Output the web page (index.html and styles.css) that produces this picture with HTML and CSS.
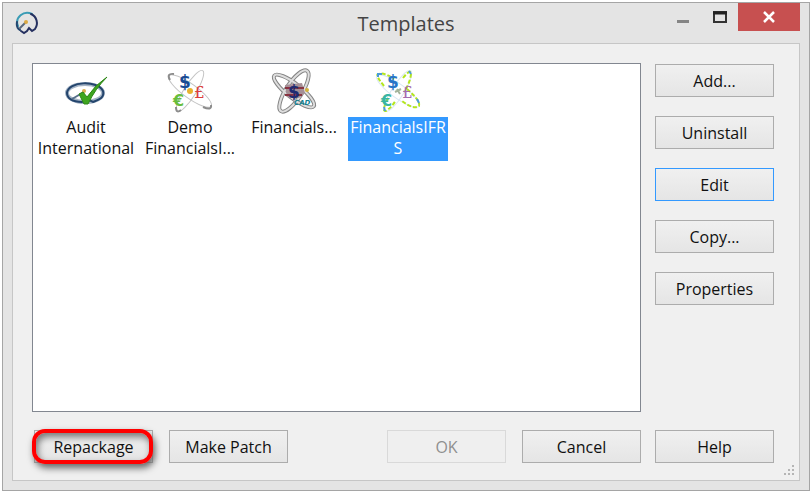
FILE: index.html
```html
<!DOCTYPE html>
<html lang="en">
<head>
  <meta charset="utf-8">
  <title>Templates</title>
  <link rel="stylesheet" href="styles.css">
</head>
<body>
  <div class="window">
    <header class="titlebar">
      <svg class="app-icon" viewBox="0 0 24 24" fill="none" stroke-linecap="round">
        <path d="M3 15A10 9.500 0 0 1 17 3" stroke="#3a9cb5" stroke-width="2"/>
        <path d="M16 3A10 10 0 0 1 20 18L17 20L14 17L12 20L9 22L6 20" stroke="#25305f" stroke-width="2"/>
        <path d="M2 11Q1 17 5 19" stroke="#25466f" stroke-width="2"/>
        <path d="M5 17L10 12" stroke="#59687c" stroke-width="2"/>
        <circle cx="11" cy="11" r="2" fill="#dba943"/>
      </svg>
      <h1>Templates</h1>
      <div class="window-controls">
        <button type="button" class="minimize" aria-label="Minimize">
          <svg width="12" height="14"><path d="M0 11.500H12" stroke="#858585" stroke-width="3"/></svg>
        </button>
        <button type="button" class="maximize" aria-label="Maximize">
          <svg width="14" height="12"><path d="M1 1H13V11H1Z" fill="none" stroke="#333" stroke-width="2"/><path d="M0 2H14" stroke="#222" stroke-width="3"/></svg>
        </button>
        <button type="button" class="close" aria-label="Close">
          <svg width="12" height="12"><path d="M1 1L11 11M11 1L1 11" stroke="#fff" stroke-width="2.500"/></svg>
        </button>
      </div>
    </header>

    <main class="client">
      <ul class="template-list">
        <li class="template">
          <svg viewBox="0 0 44 44" fill="none">
            <ellipse cx="21" cy="24" rx="18" ry="9" stroke="#a5b4c6" stroke-width="4"/>
            <path d="M3 24C4 12 34 11 39 22C41 29 34 31 29 33L23 30L18 33C8 33 3 29 3 24" stroke="#24456d" stroke-width="2"/>
            <path d="M8 30L20 23" stroke="#56708b" stroke-width="2"/>
            <circle cx="20" cy="22" r="2" fill="#d9ae4d"/>
            <path d="M15 25L19 23L23 28Q31 16 43 8Q31 20 24 35H20Z" fill="#3fa51f" stroke="#2f8719"/>
          </svg>
          <span>Audit International</span>
        </li>
        <li class="template">
          <svg viewBox="0 0 44 44" fill="none">
            <g stroke="#c4c4c4">
              <ellipse cx="22" cy="22" rx="26" ry="7" transform="rotate(36 22 22)"/>
              <ellipse cx="22" cy="22" rx="24" ry="6" transform="rotate(-58 22 22)"/>
            </g>
            <path d="M2 11Q-2 4 6 5M35 38Q44 42 43 36M8 38Q8 45 13 41" stroke="#8c8c8c" stroke-width="2"/>
            <text x="11" y="19" class="dollar" fill="#174b94">$</text>
            <text x="26" y="29" class="pound" fill="#da3e3e">£</text>
            <text x="5" y="37" class="euro" fill="#67bd3d">€</text>
            <circle cx="22" cy="22" r="3" fill="#e8b22f"/>
          </svg>
          <span>Demo FinancialsI...</span>
        </li>
        <li class="template">
          <svg viewBox="0 0 44 44" fill="none">
            <g stroke="#858585" stroke-width="4">
              <ellipse cx="22" cy="22" rx="25" ry="7" transform="rotate(38 22 22)"/>
              <ellipse cx="22" cy="22" rx="24" ry="8" transform="rotate(-57 22 22)"/>
            </g>
            <g stroke="#dedede" stroke-width="2">
              <ellipse cx="22" cy="22" rx="25" ry="7" transform="rotate(38 22 22)"/>
              <ellipse cx="22" cy="22" rx="24" ry="8" transform="rotate(-57 22 22)"/>
            </g>
            <path d="M13 16L30 14L33 24L27 29L15 28Z" fill="#a58f96"/>
            <path d="M13 19H32M13 26H30" stroke="#8a3340" stroke-width="2"/>
            <text x="16" y="29" class="dollar" fill="#202b72">$</text>
            <text x="22" y="36" class="cad" fill="#147f91">CAD</text>
            <circle cx="35" cy="21" r="2" fill="#d5b33d"/>
          </svg>
          <span>Financials...</span>
        </li>
        <li class="template selected">
          <svg viewBox="0 0 44 44" fill="none">
            <g stroke="#d9e6f2">
              <ellipse cx="22" cy="22" rx="26" ry="7" transform="rotate(36 22 22)"/>
              <ellipse cx="22" cy="22" rx="24" ry="6" transform="rotate(-58 22 22)"/>
            </g>
            <g stroke="#b4e61e" stroke-width="2" stroke-dasharray="4 2">
              <path d="M8 17Q-1 6 2 5Q8 3 18 10M27 9Q35-1 35 5Q34 14 28 23M31 20Q45 32 43 37Q38 41 26 32M12 29Q5 43 10 42Q16 38 20 31"/>
            </g>
            <path d="M2 8V5H6M33 2L35 5M41 30L43 34M8 38L9 42" stroke="#4b9bd8" stroke-width="2"/>
            <text x="11" y="19" class="dollar" fill="#2875c7">$</text>
            <text x="26" y="29" class="pound" fill="#a56cae">£</text>
            <text x="5" y="37" class="euro" fill="#38b5a3">€</text>
            <path d="M19 23L25 20M21 20L24 25" stroke="#a3b39a" stroke-width="2"/>
          </svg>
          <span>FinancialsIFRS</span>
        </li>
      </ul>

      <div class="side-buttons">
        <button type="button" class="button">Add...</button>
        <button type="button" class="button">Uninstall</button>
        <button type="button" class="button default">Edit</button>
        <button type="button" class="button">Copy...</button>
        <button type="button" class="button">Properties</button>
      </div>

      <div class="bottom-buttons">
        <button type="button" class="button highlighted">Repackage</button>
        <button type="button" class="button">Make Patch</button>
        <button type="button" class="button ok" disabled>OK</button>
        <button type="button" class="button">Cancel</button>
      </div>
      <button type="button" class="button">Help</button>

      <svg class="grip" width="12" height="12" fill="#b5b5b5">
        <path d="M9 0h2v2h-2zM9 4h2v2h-2zM9 8h2v2h-2zM5 4h2v2h-2zM5 8h2v2h-2zM1 8h2v2h-2z"/>
      </svg>
    </main>
  </div>
</body>
</html>
```

FILE: styles.css
```css
* {
  box-sizing: border-box;
}

body {
  margin: 0;
  padding: 2px;
  background: #fff;
  color: #111;
  font-family: "Open Sans", "Noto Sans", sans-serif;
  font-size: 16px;
}

.window {
  display: flex;
  flex-direction: column;
  min-height: calc(100vh - 4px);
  padding: 0 9px 9px;
  border: 1px solid #a5a5a5;
  background: #e4e4e4;
}

.titlebar {
  display: grid;
  grid-template-columns: 1fr auto 1fr;
  align-items: center;
  height: 40px;
}

.app-icon {
  width: 24px;
  height: 24px;
  margin-left: 3px;
}

h1 {
  margin: 0;
  color: #444;
  font-size: 20px;
  font-weight: normal;
}

.window-controls {
  display: flex;
  align-self: start;
  justify-content: flex-end;
}

.window-controls button {
  display: flex;
  align-items: center;
  justify-content: center;
  width: 37px;
  height: 28px;
  padding: 0;
  border: none;
  background: none;
}

.window-controls .close {
  width: 62px;
  background: #c75050;
}

.client {
  position: relative;
  display: grid;
  flex: 1;
  grid-template-columns: 1fr 119px;
  grid-template-rows: 1fr auto;
  gap: 18px 14px;
  padding: 19px 25px 17px 19px;
  border: 1px solid #c6c6c6;
  background: #f0f0f0;
}

.template-list {
  display: flex;
  flex-wrap: wrap;
  align-content: flex-start;
  gap: 4px;
  margin: 0;
  padding: 5px 3px;
  border: 1px solid #828790;
  background: #fff;
  list-style: none;
}

.template {
  width: 100px;
  line-height: 21px;
  text-align: center;
}

.template svg {
  display: block;
  width: 44px;
  height: 44px;
  margin: 0 auto 4px;
  overflow: visible;
}

.template span {
  display: block;
  padding-bottom: 2px;
  word-break: break-word;
}

.selected span {
  background: #3399ff;
  color: #fff;
}

.dollar {
  font-family: "DejaVu Sans", sans-serif;
  font-size: 17px;
  font-weight: bold;
}

.pound {
  font-family: "DejaVu Serif", serif;
  font-size: 17px;
}

.euro {
  font-family: "DejaVu Sans", sans-serif;
  font-size: 16px;
  font-weight: bold;
}

.cad {
  font-family: "DejaVu Sans", sans-serif;
  font-size: 7px;
  font-style: italic;
  font-weight: bold;
}

.button {
  width: 119px;
  height: 33px;
  padding: 0;
  border: 1px solid #acacac;
  background: linear-gradient(#f0f0f0, #e5e5e5);
  color: #111;
  font: inherit;
}

.button.default {
  border-color: #3399ff;
}

.button:disabled {
  border-color: #d9d9d9;
  background: #efefef;
  color: #909090;
}

.side-buttons {
  display: flex;
  flex-direction: column;
  gap: 19px;
  padding-top: 1px;
}

.bottom-buttons {
  display: flex;
  gap: 16px;
  padding-left: 2px;
}

.bottom-buttons .ok {
  margin-left: auto;
}

.highlighted {
  position: relative;
}

/* red marker ring around the button */
.highlighted::after {
  content: "";
  position: absolute;
  inset: -2px -1px -2px -3px;
  border: 4px solid #f00;
  border-radius: 13px;
  box-shadow: 2px 4px 7px #666, inset 2px 4px 7px #777;
}

.grip {
  position: absolute;
  right: 4px;
  bottom: 3px;
}
```
